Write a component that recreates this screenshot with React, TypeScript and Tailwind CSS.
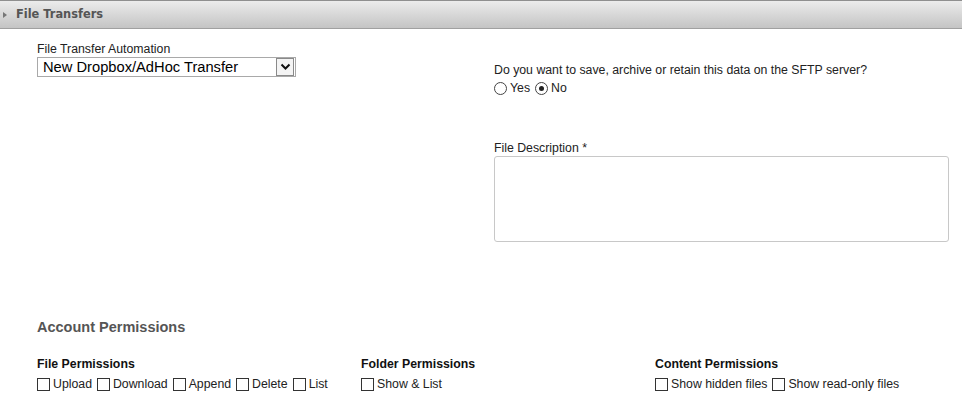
import * as React from "react";

function Box({ checked = false }: { checked?: boolean }) {
  return (
    <span className="inline-block h-[13px] w-[13px] shrink-0 border border-[#333] bg-white">
      {checked && <span className="block h-full w-full bg-[#333]" />}
    </span>
  );
}

function Radio({ checked = false }: { checked?: boolean }) {
  return (
    <span className="inline-flex h-[13px] w-[13px] shrink-0 items-center justify-center rounded-full border border-[#444] bg-white">
      {checked && <span className="block h-[5px] w-[5px] rounded-full bg-[#222]" />}
    </span>
  );
}

function Check({ label }: { label: string }) {
  return (
    <label className="flex items-center gap-[3px]">
      <Box />
      <span>{label}</span>
    </label>
  );
}

function Group({ title, items, width }: { title: string; items: string[]; width: string }) {
  return (
    <div className={width}>
      <div className="text-[12.3px] leading-[14px] font-bold text-[#111]">{title}</div>
      <div className="mt-[6px] flex items-center gap-[5px] text-[12.3px] leading-[14px] text-[#222]">
        {items.map((it) => (
          <Check key={it} label={it} />
        ))}
      </div>
    </div>
  );
}

export default function App() {
  return (
    <div
      className="h-[406px] w-[962px] bg-white text-[#222]"
      style={{ fontFamily: '"Liberation Sans", Arial, sans-serif' }}
    >
      <div className="flex h-[29px] items-center border-t border-b border-t-[#8f8f8f] border-b-[#a0a0a0] bg-gradient-to-b from-[#ececec] to-[#c4c4c4] pl-[3px]">
        <span className="mr-[9px] h-0 w-0 border-y-[3.5px] border-l-[4px] border-y-transparent border-l-[#777]" />
        <span
          className="text-[11.4px] font-bold text-[#555]"
          style={{ fontFamily: '"DejaVu Sans", Verdana, sans-serif' }}
        >
          File Transfers
        </span>
      </div>

      <div className="flex pl-[37px]">
        <div className="w-[457px] pt-[13px]">
          <div className="text-[12.3px] leading-[14px]">File Transfer Automation</div>
          <div className="mt-[1px] flex h-[20px] w-[259px] items-center border border-[#a9a9a9] bg-white pl-[5px]">
            <span className="flex-1 text-[14.7px] leading-[18px] text-black">New Dropbox/AdHoc Transfer</span>
            <span className="mr-[1px] flex h-[18px] w-[18px] items-center justify-center border border-[#8a8a8a] bg-[#f4f4f4]">
              <svg width="11" height="8" viewBox="0 0 11 8">
                <path d="M1.5 1.5 L5.5 5.5 L9.5 1.5" fill="none" stroke="#111" strokeWidth="2" />
              </svg>
            </span>
          </div>
        </div>

        <div className="pt-[34px]">
          <div className="text-[12.3px] leading-[14px]">
            Do you want to save, archive or retain this data on the SFTP server?
          </div>
          <div className="mt-[4px] flex items-center text-[12.3px] leading-[14px]">
            <Radio />
            <span className="ml-[3px] mr-[5px]">Yes</span>
            <Radio checked />
            <span className="ml-[3px]">No</span>
          </div>
          <div className="mt-[46px] text-[12.3px] leading-[14px]">File Description *</div>
          <div className="mt-[1px] h-[86px] w-[455px] rounded-[3px] border border-[#c8c8c8] bg-white" />
        </div>
      </div>

      <div className="mt-[77px] pl-[37px]">
        <div className="text-[14.5px] leading-[17px] font-bold text-[#555]">Account Permissions</div>
        <div className="mt-[21px] flex">
          <Group
            title="File Permissions"
            width="w-[324px]"
            items={["Upload", "Download", "Append", "Delete", "List"]}
          />
          <Group title="Folder Permissions" width="w-[294px]" items={["Show & List"]} />
          <Group title="Content Permissions" width="" items={["Show hidden files", "Show read-only files"]} />
        </div>
      </div>
    </div>
  );
}
